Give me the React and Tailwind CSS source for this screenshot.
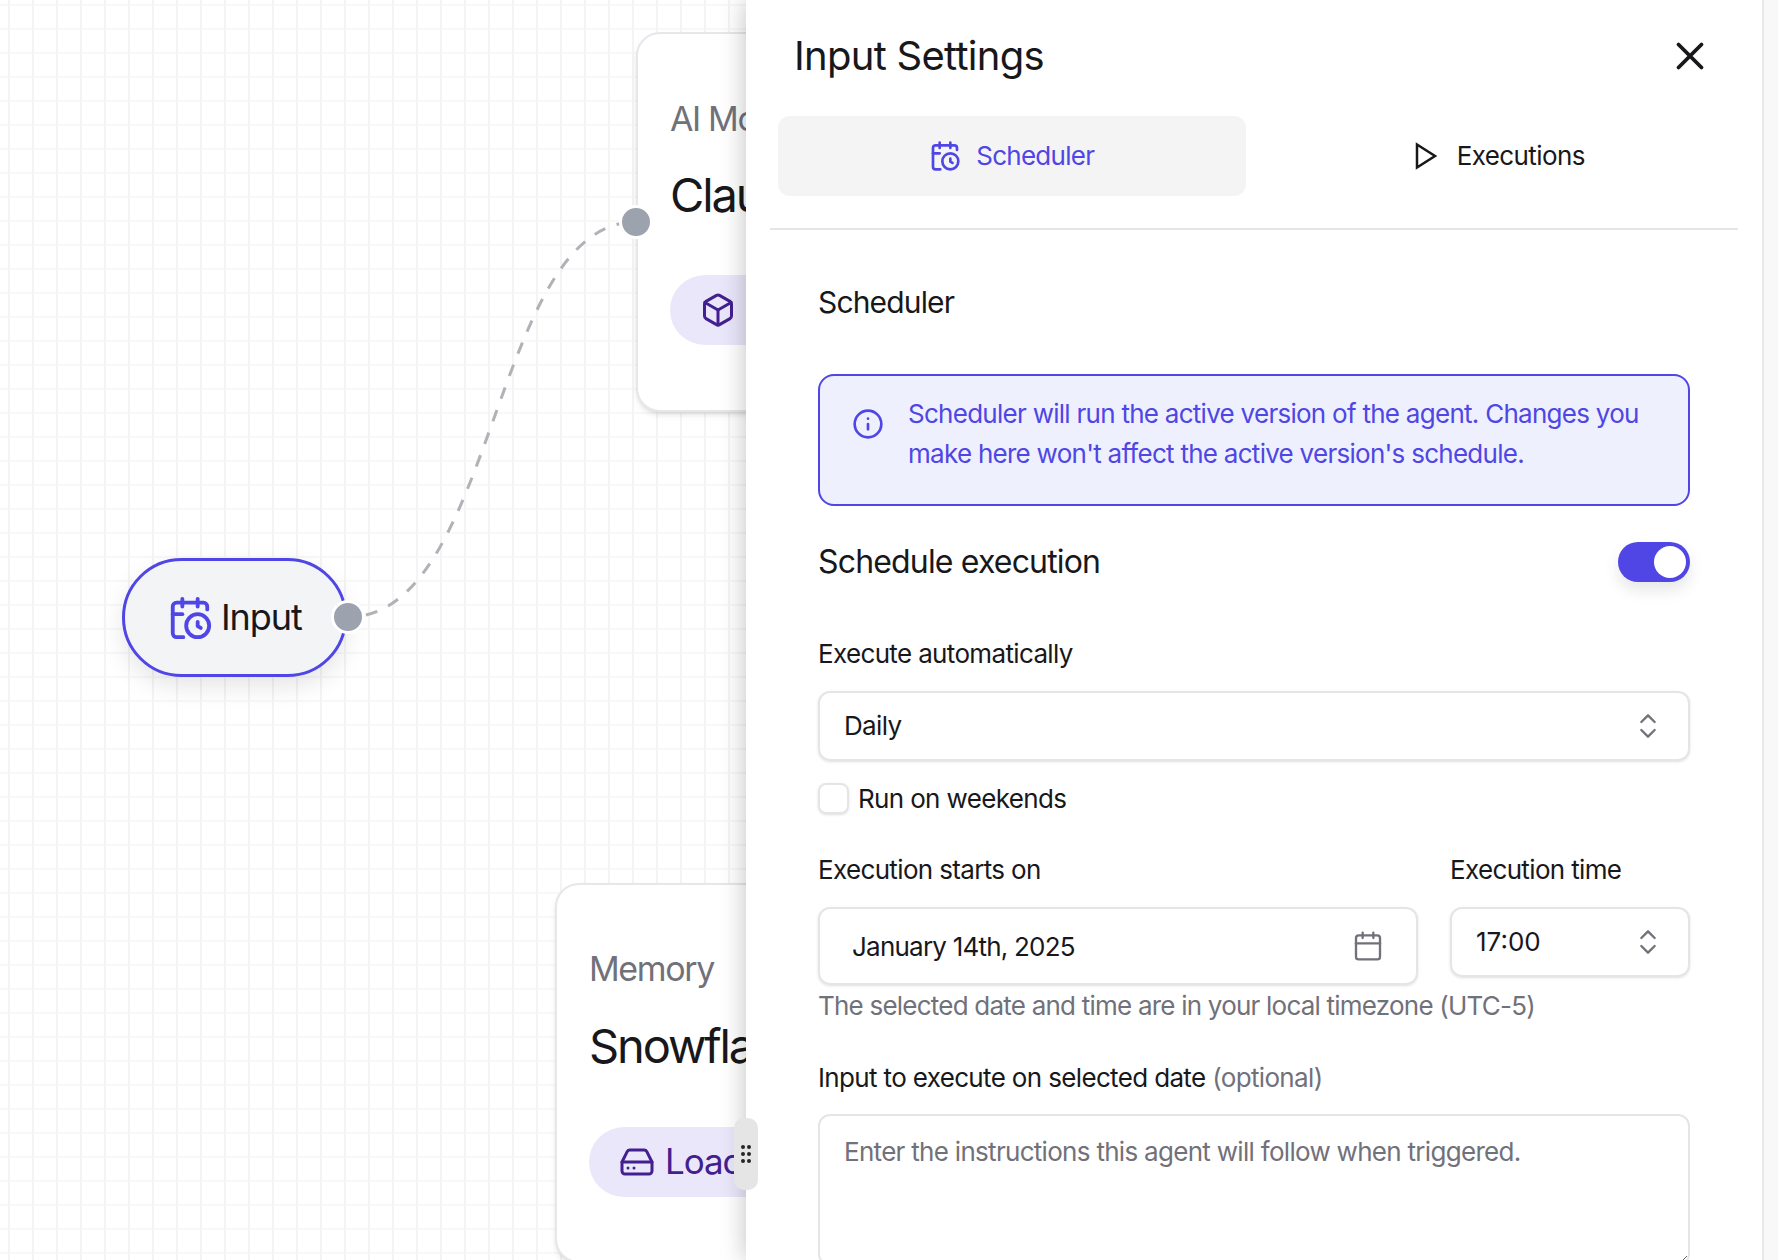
import React from "react";
import { CalendarClock, Box, HardDrive, X, Info, ChevronsUpDown, Calendar } from "lucide-react";

const font = { fontFamily: "Inter, 'Liberation Sans', sans-serif" };

function Handle({ className }) {
  return <div className={"absolute w-[34px] h-[34px] rounded-full bg-[#9ca3af] border-[3px] border-white " + className} />;
}

function Canvas() {
  return (
    <div className="relative w-[746px] h-[1260px] shrink-0 overflow-hidden bg-white bg-[linear-gradient(to_right,#f4f4f5_2px,transparent_2px),linear-gradient(to_bottom,#f8f8f8_2px,transparent_2px)] bg-[size:24px_24px] bg-[position:8px_4px]">
      <svg className="absolute left-0 top-0" width="746" height="1260" fill="none">
        <path d="M348 617 C496 617 492 222 636 222" stroke="#b1b1b7" strokeWidth="3" strokeDasharray="12 12" strokeDashoffset="6" />
      </svg>

      <div className="absolute left-[636px] top-[32px] w-[400px] h-[380px] rounded-[24px] bg-white border-2 border-[#e5e7eb] shadow-md pl-[32px] pt-[61px]">
        <div className="text-[34px] leading-[48px] text-[#71717a] tracking-[-0.04em]">AI Model</div>
        <div className="mt-[20px] text-[47px] leading-[64px] text-[#18181b] tracking-[-0.045em]">Claude</div>
        <div className="mt-[48px] h-[70px] w-[300px] rounded-full bg-[#ebe7fb] flex items-center pl-[30px]">
          <Box size={36} strokeWidth={2} className="text-[#42208f]" />
        </div>
      </div>
      <Handle className="left-[619px] top-[205px]" />

      <div className="absolute left-[122px] top-[558px] w-[225px] h-[119px] rounded-full bg-[#f3f4f6] border-[3px] border-[#4f46e5] shadow-[0_10px_24px_rgba(0,0,0,0.1)] flex items-center pl-[42px] gap-[8px]">
        <CalendarClock size={46} strokeWidth={2} className="text-[#4f46e5]" />
        <span className="pb-[2px] text-[36px] leading-none text-[#18181b] tracking-[-0.03em]">Input</span>
      </div>
      <Handle className="left-[331px] top-[600px]" />

      <div className="absolute left-[555px] top-[883px] w-[400px] h-[380px] rounded-[24px] bg-white border-2 border-[#e5e7eb] shadow-md pl-[32px] pt-[60px]">
        <div className="text-[34px] leading-[48px] text-[#71717a] tracking-[-0.04em]">Memory</div>
        <div className="mt-[21px] text-[47px] leading-[64px] text-[#18181b] tracking-[-0.045em]">Snowflake</div>
        <div className="mt-[49px] h-[70px] w-[300px] rounded-full bg-[#ebe7fb] flex items-center pl-[30px] gap-[10px] text-[#42208f]">
          <HardDrive size={36} strokeWidth={2} />
          <span className="pb-[1px] text-[35px] leading-none tracking-[-0.03em]">Load</span>
        </div>
      </div>
    </div>
  );
}

function Label({ children, className = "" }) {
  return <div className={"text-[26px] leading-[32px] tracking-[-0.025em] text-[#18181b] " + className}>{children}</div>;
}

function Panel() {
  return (
    <div className="relative flex-1 h-[1260px] bg-white shadow-[0_0_24px_rgba(0,0,0,0.25)] overflow-visible">
      <div className="absolute left-[-12px] top-[1118px] w-[24px] h-[72px] rounded-[10px] bg-[#e5e5e5] z-10 flex items-center justify-center">
        <div className="grid grid-cols-2 gap-x-[2px] gap-y-[3px]">
          {[0, 1, 2, 3, 4, 5].map((i) => (
            <span key={i} className="w-[4px] h-[4px] rounded-full bg-[#27272a]" />
          ))}
        </div>
      </div>
      <div className="h-[1260px] overflow-hidden">
        <div className="h-[116px] pl-[48px] pr-[49px] pt-[36px] flex justify-between items-start">
          <h1 className="text-[40px] leading-[40px] font-normal tracking-[-0.018em] text-[#18181b]">Input Settings</h1>
          <X size={46} strokeWidth={2} className="text-[#18181b] mt-[-3px]" />
        </div>
        <div className="ml-[24px] mr-[24px] pb-[32px] border-b-2 border-[#e5e5e5]">
          <div className="ml-[8px] mr-[8px] grid grid-cols-2 gap-[17px]">
            <div className="h-[80px] rounded-[12px] bg-[#f4f4f4] flex items-center justify-center gap-[15px] text-[#4f46e5]">
              <CalendarClock size={32} strokeWidth={2} />
              <span className="text-[26px] leading-none tracking-[-0.028em]">Scheduler</span>
            </div>
            <div className="h-[80px] rounded-[12px] pl-[6px] flex items-center justify-center gap-[19px] text-[#18181b]">
              <svg width="24" height="28" viewBox="0 0 24 28" fill="none" stroke="currentColor" strokeWidth="2.5" strokeLinejoin="miter">
                <path d="M3 2.5 L21 14 L3 25.5 Z" />
              </svg>
              <span className="text-[26px] leading-none tracking-[-0.023em]">Executions</span>
            </div>
          </div>
        </div>
        <div className="ml-[72px] w-[872px]">
          <div className="mt-[52px] text-[30px] leading-[40px] tracking-[-0.028em] text-[#18181b]">Scheduler</div>
          <div className="mt-[52px] h-[132px] rounded-[16px] border-2 border-[#4f46e5] bg-[#eef0fd] pl-[32px] pt-[18px] flex gap-[24px] text-[#4f46e5]">
            <Info size={32} strokeWidth={2} className="mt-[14px] shrink-0" />
            <p className="w-[770px] text-[26px] leading-[40px] tracking-[-0.028em]">Scheduler will run the active version of the agent. Changes you make here won't affect the active version's schedule.</p>
          </div>
          <div className="mt-[36px] h-[40px] flex items-center justify-between">
            <span className="text-[32px] leading-[40px] tracking-[-0.026em] text-[#18181b]">Schedule execution</span>
            <div className="w-[72px] h-[40px] rounded-full bg-[#4f46e5] shadow-[0_8px_16px_rgba(0,0,0,0.1)] flex items-center justify-end pr-[4px]">
              <span className="w-[32px] h-[32px] rounded-full bg-white" />
            </div>
          </div>
          <Label className="mt-[56px]">Execute automatically</Label>
          <div className="mt-[21px] h-[70px] rounded-[12px] border-2 border-[#e5e5e5] shadow-sm flex items-center justify-between pl-[24px] pr-[24px]">
            <span className="pb-[2px] text-[26px] tracking-[-0.025em] text-[#18181b]">Daily</span>
            <ChevronsUpDown size={32} strokeWidth={1.75} className="text-[#71717a]" />
          </div>
          <div className="mt-[22px] h-[30px] flex items-center gap-[9px]">
            <span className="w-[31px] h-[31px] rounded-[8px] border-2 border-[#e5e5e5] shadow-sm" />
            <span className="text-[26px] tracking-[-0.025em] text-[#18181b]">Run on weekends</span>
          </div>
          <div className="mt-[41px] flex gap-[32px] items-start">
            <div className="w-[600px]">
              <Label>Execution starts on</Label>
              <div className="mt-[21px] h-[78px] rounded-[12px] border-2 border-[#e5e5e5] shadow-sm flex items-center justify-between pl-[32px] pr-[32px]">
                <span className="text-[26px] tracking-[-0.03em] text-[#18181b]">January 14th, 2025</span>
                <Calendar size={32} strokeWidth={1.75} className="text-[#71717a]" />
              </div>
            </div>
            <div className="flex-1">
              <Label>Execution time</Label>
              <div className="mt-[21px] h-[70px] rounded-[12px] border-2 border-[#e5e5e5] shadow-sm flex items-center justify-between pl-[24px] pr-[24px]">
                <span className="pb-[1px] text-[26px] tracking-normal text-[#18181b]">17:00</span>
                <ChevronsUpDown size={32} strokeWidth={1.75} className="text-[#71717a]" />
              </div>
            </div>
          </div>
          <div className="mt-[5px] text-[26px] leading-[32px] tracking-[-0.03em] text-[#71717a]">The selected date and time are in your local timezone (UTC-5)</div>
          <Label className="mt-[40px]">Input to execute on selected date <span className="text-[#71717a]">(optional)</span></Label>
          <textarea
            className="mt-[20px] block w-full h-[152px] rounded-[12px] border-2 border-[#e5e5e5] px-[24px] pt-[20px] text-[26px] leading-[32px] tracking-[-0.027em] text-[#18181b] placeholder:text-[#71717a] outline-none"
            placeholder="Enter the instructions this agent will follow when triggered."
          />
        </div>
      </div>
    </div>
  );
}

export default function App() {
  return (
    <div className="flex w-[1778px] h-[1260px] overflow-hidden bg-white" style={font}>
      <Canvas />
      <Panel />
      <div className="relative w-[16px] h-[1260px] shrink-0 bg-[#f8f8f8] border-l-2 border-[#e8e8e8]" />
    </div>
  );
}
